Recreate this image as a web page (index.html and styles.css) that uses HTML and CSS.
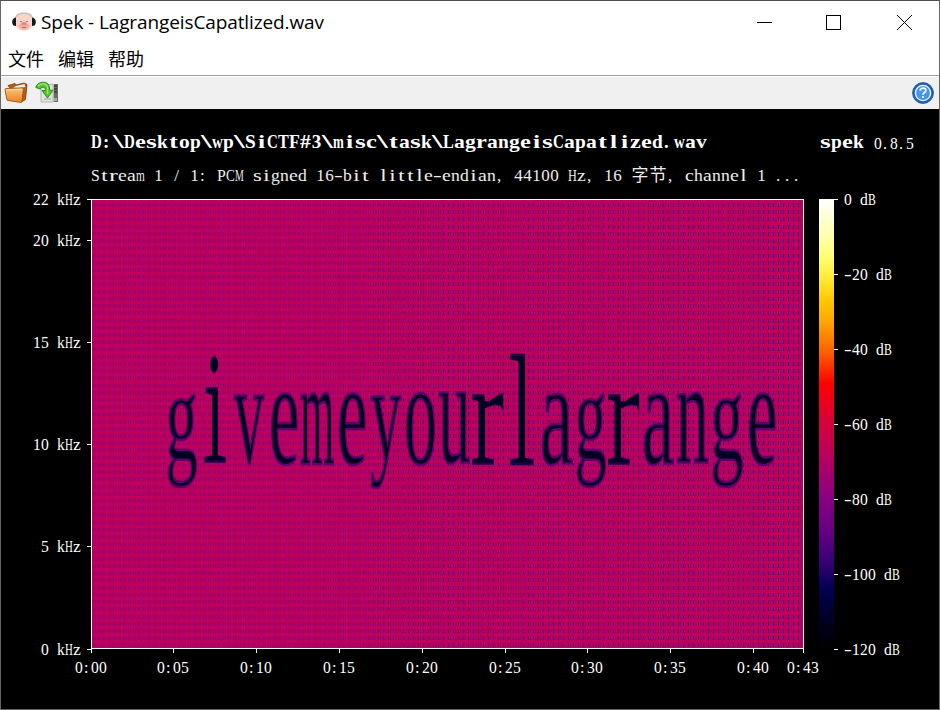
FILE: index.html
```html
<!DOCTYPE html>
<html lang="zh-CN">
<head>
<meta charset="utf-8">
<title>Spek - LagrangeisCapatlized.wav</title>
<link rel="stylesheet" href="styles.css">
</head>
<body>
<div class="window">
  <header class="titlebar">
    <svg class="app-icon" width="24" height="20" viewBox="0 0 24 20">
      <ellipse cx="12" cy="10" rx="9.6" ry="8.8" fill="#f8d5c8"/>
      <path d="M2.5 7.5C4 2.8 8 .9 12 .9s8 1.9 9.500 6.600" fill="none" stroke="#bfc3c3" stroke-width="1.500"/>
      <path d="M4 5.500C1 6 0 8 .2 10.500S1.500 14 4 14zM20 5.500c3 .5 4 2.500 3.800 5S22.500 14 20 14z" fill="#161616"/>
      <ellipse cx="12" cy="14" rx="5.500" ry="3.500" fill="#f4b0a5"/>
      <ellipse cx="12" cy="12" rx="3" ry="2.200" fill="#ef9f99"/>
      <path d="M8 9.500h2M14 9.500h2M11 11v1.500M13 11v1.500M10 15.500h4" stroke="#a85a58" stroke-width=".8"/>
    </svg>
    <h1 class="title">Spek - LagrangeisCapatlized.wav</h1>
    <svg class="controls" width="160" height="20" viewBox="0 0 160 20" fill="none" stroke="#000" shape-rendering="crispEdges">
      <path d="M1 10.500h15"/>
      <rect x="70.500" y="3.500" width="14" height="14"/>
      <path d="M141 3l15 15M156 3l-15 15" shape-rendering="auto"/>
    </svg>
  </header>
  <nav class="menu"><span>文件</span><span>编辑</span><span>帮助</span></nav>
  <div class="toolbar">
    <div class="tools">
      <svg width="24" height="24" viewBox="0 0 24 24">
        <defs><linearGradient id="folder" x2="0" y2="1"><stop stop-color="#ffc477"/><stop offset="1" stop-color="#e98222"/></linearGradient></defs>
        <path d="M4 4.500l7-2 1 1.500 8-2 3 1.500-1.500 15-4 2.500z" fill="#b55c16" stroke="#6e3c12" stroke-width=".8"/>
        <path d="M12 5l8.500-2 .8 3L8 8z" fill="#f7f2e8"/>
        <path d="M1 8.500q0-1 1-1l16-.6q1.500 0 1.400 1.300L18 20.500q-.1 1-1.200.9L4 19.500q-1-.1-1.200-1.200z" fill="url(#folder)" stroke="#9c5218" stroke-width=".9"/>
        <path d="M2.500 9l15.500-.8" stroke="#ffe0ad"/>
      </svg>
      <svg width="24" height="24" viewBox="0 0 24 24">
        <path d="M6 5l12-2v18H6z" fill="#e2e3e1" stroke="#b1b3b0"/>
        <path d="M18 3h5v18h-5z" fill="#686b68"/>
        <path d="M19 5h3M19 8h3M19 11h3" stroke="#202220"/>
        <path d="M18.500 3v18" stroke="#b5b8b5"/><path d="M19 17h3v3h-3z" fill="#aaa"/>
        <path d="M9 18h7" stroke="#969996"/>
        <path d="M.8 6.500C2 0 13-.8 14.300 5.500l.4 3.700H18L12.500 17 7 9.500h3.500C10.500 7 9 5.500 6 6.500l-.6 1.600z" fill="#55c62c" stroke="#278412" stroke-width=".9"/>
        <path d="M3 5C6 2 11 2 12.500 6l.3 7" fill="none" stroke="#9aec6e" stroke-width="1.200"/>
      </svg>
    </div>
    <svg class="help" width="22" height="22" viewBox="0 0 22 22">
      <circle cx="11" cy="11" r="10.500" fill="#1d61b8" stroke="#17508f" stroke-width=".7"/>
      <circle cx="11" cy="11" r="7.600" fill="#4095f3" stroke="#f1f8ff" stroke-width="1.400"/>
      <path d="M8.200 8.700c.2-3.500 5.800-3.500 5.600-.3 0 2-2.800 2.200-2.800 4.300" fill="none" stroke="#fff" stroke-width="1.800"/>
      <circle cx="11" cy="15" r="1.100" fill="#fff"/>
    </svg>
  </div>
  <main class="spectrum">
    <svg id="chart" width="938" height="600" viewBox="1 109 938 600">
      <defs>
        <linearGradient id="palette" x2="0" y2="1">
          <stop offset="0" stop-color="#fff"/>
          <stop offset=".09" stop-color="#ffffa5"/>
          <stop offset=".13" stop-color="#ffff70"/>
          <stop offset=".18" stop-color="#ffe832"/>
          <stop offset=".225" stop-color="#ffc800"/>
          <stop offset=".27" stop-color="#ffa800"/>
          <stop offset=".34" stop-color="#ff6000"/>
          <stop offset=".41" stop-color="#f00"/>
          <stop offset=".5" stop-color="#d6003f"/>
          <stop offset=".57" stop-color="#b8005f"/>
          <stop offset=".66" stop-color="#8c0080"/>
          <stop offset=".74" stop-color="#640082"/>
          <stop offset=".8" stop-color="#3c0078"/>
          <stop offset=".87" stop-color="#00004e"/>
          <stop offset=".94" stop-color="#000020"/>
          <stop offset="1" stop-color="#000"/>
        </linearGradient>
        <clipPath id="plot"><path d="M92 200h711v448H92z"/></clipPath>
        <filter id="thin" filterUnits="userSpaceOnUse" x="92" y="200" width="711" height="448"><feMorphology operator="erode" radius="2 0"/></filter>
      </defs>
    </svg>
  </main>
</div>
<script src="chart.js"></script>
</body>
</html>
```
FILE: styles.css
```css
* { box-sizing: border-box; }
body { margin: 0; background: #fff; font-family: "Noto Sans", "Noto Sans CJK SC", sans-serif; }
.window {
  width: 940px;
  height: 710px;
  display: flex;
  flex-direction: column;
  border: 1px solid #666;
  border-top-color: #554f4b;
  overflow: hidden;
}
.titlebar { height: 43px; display: flex; align-items: center; padding-left: 11px; flex: none; }
.app-icon { margin-top: -2px; }
.title { margin: 0 0 2px 5px; font: 19px/28px "Open Sans", "Noto Sans", sans-serif; letter-spacing: -0.11px; white-space: nowrap; }
.controls { margin: -2px 23px 0 auto; }
.menu {
  height: 31px;
  flex: none;
  display: flex;
  gap: 14px;
  padding: 0 7px;
  font: 18px/29px "Noto Sans CJK SC", sans-serif;
}
.toolbar {
  height: 34px;
  flex: none;
  display: flex;
  align-items: center;
  justify-content: space-between;
  padding: 0 5px 0 3px;
  background: #f0f0f0;
  border-top: 1px solid #a0a0a0;
  box-shadow: inset 0 1px #fff;
}
.tools { display: flex; gap: 7px; }
.spectrum { height: 600px; flex: none; background: #000; }
.spectrum svg { display: block; }
.label { fill: #fff; font-family: "Liberation Serif", "Noto Sans CJK SC", serif; font-size: 16px; white-space: pre; }
.stream { font-size: 17px; fill: #eee; }
.heading { font-size: 19px; font-weight: bold; }
.axis { stroke: #fff; fill: none; shape-rendering: crispEdges; }
.base { fill: #bd005c; }
.row { fill: #a50067; }
.dash { fill: none; shape-rendering: crispEdges; }
.message { font: 100px "Liberation Serif", serif; fill: #060020; }
.message text { stroke: #5c006c; stroke-width: 2px; vector-effect: non-scaling-stroke; }
.message .stem { stroke: #20004c; }
```
FILE: chart.js
```js
const NS = 'http://www.w3.org/2000/svg';
const chart = document.getElementById('chart');
const pen = document.createElement('canvas').getContext('2d');

function add(parent, name, attrs, content) {
  const node = document.createElementNS(NS, name);
  for (const key in attrs) node.setAttribute(key, attrs[key]);
  if (content) node.textContent = content;
  parent.appendChild(node);
  return node;
}

// Fixed-pitch label: one glyph per cell, CJK characters take two.
// Letters and dashes are fitted to the cell, narrow glyphs are centred.
function label(x, y, value, pitch, cls = '') {
  const text = add(chart, 'text', { class: 'label ' + cls, y });
  const style = getComputedStyle(text);
  pen.font = `${style.fontWeight} ${style.fontSize} ${style.fontFamily}`;
  let cell = 0;
  for (const char of value) {
    const cells = char > '\u2e80' ? 2 : 1;
    const room = cells * pitch;
    const left = x + cell * pitch;
    const width = pen.measureText(char).width;
    if (char === ' ') {
      add(text, 'tspan', { x: left }, char);
    } else if (/[A-Za-hkm-su-z#\\-]/.test(char) || width > room - 0.2) {
      add(text, 'tspan', { x: left, textLength: room - 0.2, lengthAdjust: 'spacingAndGlyphs' }, char);
    } else if (/[ijlt]/.test(char)) {
      const size = Math.min(room, width * 1.35);
      add(text, 'tspan', { x: left + (room - size) / 2, textLength: size, lengthAdjust: 'spacingAndGlyphs' }, char);
    } else {
      add(text, 'tspan', { x: ',.:'.includes(char) ? left + 1 : left + (room - width) / 2 }, char);
    }
    cell += cells;
  }
}

label(91, 148, 'D:\\Desktop\\wp\\SiCTF#3\\misc\\task\\LagrangeisCapatlized.wav', 11, 'heading');
label(91, 181, 'Stream 1 / 1: PCM signed 16-bit little-endian, 44100 Hz, 16 字节, channel 1 ...', 9, 'stream');
label(820, 148, 'spek', 11, 'heading');
label(874, 149, '0.8.5', 8);

const plot = add(chart, 'g', { 'clip-path': 'url(#plot)' });
add(plot, 'rect', { class: 'base', x: 92, y: 200, width: 711, height: 448 });
for (let y = 203; y < 648; y += 7.22) {
  add(plot, 'rect', { class: 'row', x: 92, y, width: 711, height: 4, opacity: 0.2 });
}
let index = 0;
for (let x = 93; x < 803; x += 2.5, index++) {
  const t = (x - 92) / 711;
  const even = index % 2 === 0;
  const beat = 0.5 + 0.5 * Math.sin(x / 17);
  const opacity = even ? 0.36 + 0.32 * t + 0.22 * beat * t : 0.32 - 0.16 * t;
  const colour = even && t > 0.4 ? '#2a0080' : '#600090';
  for (let y = 203; y < 648; y += 7.22) {
    const px = Math.floor(x);
    const py = Math.round(y);
    add(plot, 'path', { class: 'dash', d: `M${px + 0.5} ${py}v4`, stroke: colour, opacity });
  }
}

// Letters with the left, right, top and bottom of the ink.
const letters = [
  ['g', 168, 197, 394, 487], ['i', 205, 225, 358, 464], ['v', 234, 264, 395, 464],
  ['e', 271, 297, 394, 465], ['m', 301, 334, 393, 464], ['e', 339, 365, 394, 465],
  ['y', 371, 401, 395, 487], ['o', 406, 435, 394, 465], ['u', 439, 470, 393, 465],
  ['r', 473, 503, 393, 464], ['l', 511, 533, 356, 464], ['a', 542, 573, 394, 465],
  ['g', 577, 606, 394, 487], ['r', 609, 639, 393, 464], ['a', 644, 674, 394, 465],
  ['n', 677, 708, 393, 464], ['g', 713, 743, 394, 487], ['e', 749, 775, 394, 465]
];
const message = add(plot, 'g', { class: 'message' });
pen.font = '100px "Liberation Serif"';
for (const [char, inkLeft, inkRight, top, bottom] of letters) {
  const stem = 'ilr'.includes(char);
  const left = stem ? inkLeft - 2 : inkLeft;
  const right = stem ? inkRight + 2 : inkRight;
  const m = pen.measureText(char);
  const sx = (right - left) / (m.actualBoundingBoxRight + m.actualBoundingBoxLeft);
  const sy = (bottom - top) / (m.actualBoundingBoxAscent + m.actualBoundingBoxDescent);
  const dx = left + m.actualBoundingBoxLeft * sx;
  const dy = top + m.actualBoundingBoxAscent * sy;
  const holder = add(message, 'g', stem ? { filter: 'url(#thin)' } : {});
  add(holder, 'text', { class: stem ? 'stem' : 'round', transform: `translate(${dx} ${dy}) scale(${sx} ${sy})` }, char);
}

add(chart, 'rect', { class: 'axis', x: 91.5, y: 199.5, width: 712, height: 449 });
add(chart, 'rect', { x: 819, y: 199, width: 15, height: 450, fill: 'url(#palette)' });

[[199, '22 kHz'], [240, '20 kHz'], [342, '15 kHz'], [444, '10 kHz'], [546, '5 kHz'], [649, '0 kHz']].forEach(([y, name]) => {
  add(chart, 'path', { class: 'axis', d: `M87 ${y + 0.5}h4` });
  label(81 - name.length * 8, y + 6, name, 8);
});
['0:00', '0:05', '0:10', '0:15', '0:20', '0:25', '0:30', '0:35', '0:40', '0:43'].forEach((name, i) => {
  const x = [91, 173, 256, 339, 422, 505, 587, 670, 753, 803][i];
  add(chart, 'path', { class: 'axis', d: `M${x + 0.5} 648v5` });
  label(x - 16, 673, name, 8);
});
[0, -20, -40, -60, -80, -100, -120].forEach((db, i) => {
  const y = [199, 274, 349, 424, 499, 574, 649][i];
  add(chart, 'path', { class: 'axis', d: `M834 ${y + 0.5}h4` });
  label(844, y + 6, `${db} dB`, 8);
});
```
